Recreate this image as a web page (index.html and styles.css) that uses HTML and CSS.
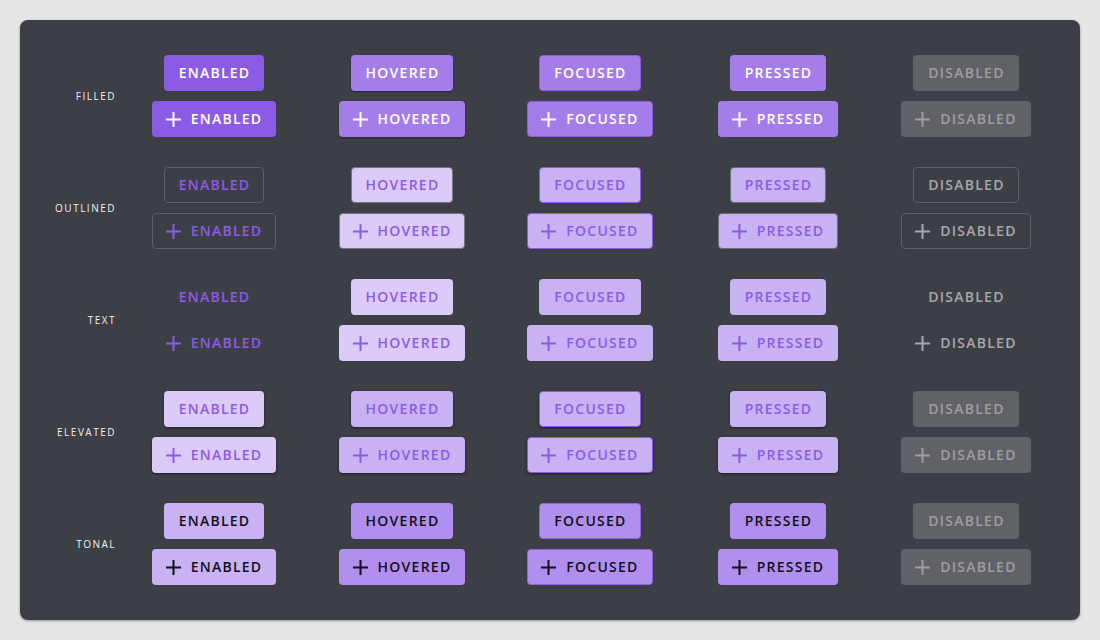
FILE: index.html
```html
<!DOCTYPE html>
<html>
<head>
<meta charset="utf-8">
<link rel="stylesheet" href="styles.css">
</head>
<body>
<div class="panel">
  <div class="grid">
    <!-- FILLED -->
    <div class="label">FILLED</div>
    <div class="cell"><button class="btn filled enabled">ENABLED</button><button class="btn icon filled enabled"><svg class="plus" viewBox="0 0 15 15"><path d="M7.5 0v15M0 7.5h15"/></svg>ENABLED</button></div>
    <div class="cell"><button class="btn filled hovered">HOVERED</button><button class="btn icon filled hovered"><svg class="plus" viewBox="0 0 15 15"><path d="M7.5 0v15M0 7.5h15"/></svg>HOVERED</button></div>
    <div class="cell"><button class="btn filled focused">FOCUSED</button><button class="btn icon filled focused"><svg class="plus" viewBox="0 0 15 15"><path d="M7.5 0v15M0 7.5h15"/></svg>FOCUSED</button></div>
    <div class="cell"><button class="btn filled pressed">PRESSED</button><button class="btn icon filled pressed"><svg class="plus" viewBox="0 0 15 15"><path d="M7.5 0v15M0 7.5h15"/></svg>PRESSED</button></div>
    <div class="cell"><button class="btn solid-disabled">DISABLED</button><button class="btn icon solid-disabled"><svg class="plus" viewBox="0 0 15 15"><path d="M7.5 0v15M0 7.5h15"/></svg>DISABLED</button></div>

    <!-- OUTLINED -->
    <div class="label">OUTLINED</div>
    <div class="cell"><button class="btn outlined enabled">ENABLED</button><button class="btn icon outlined enabled"><svg class="plus" viewBox="0 0 15 15"><path d="M7.5 0v15M0 7.5h15"/></svg>ENABLED</button></div>
    <div class="cell"><button class="btn outlined hovered">HOVERED</button><button class="btn icon outlined hovered"><svg class="plus" viewBox="0 0 15 15"><path d="M7.5 0v15M0 7.5h15"/></svg>HOVERED</button></div>
    <div class="cell"><button class="btn outlined focused">FOCUSED</button><button class="btn icon outlined focused"><svg class="plus" viewBox="0 0 15 15"><path d="M7.5 0v15M0 7.5h15"/></svg>FOCUSED</button></div>
    <div class="cell"><button class="btn outlined pressed">PRESSED</button><button class="btn icon outlined pressed"><svg class="plus" viewBox="0 0 15 15"><path d="M7.5 0v15M0 7.5h15"/></svg>PRESSED</button></div>
    <div class="cell"><button class="btn outlined disabled">DISABLED</button><button class="btn icon outlined disabled"><svg class="plus" viewBox="0 0 15 15"><path d="M7.5 0v15M0 7.5h15"/></svg>DISABLED</button></div>

    <!-- TEXT -->
    <div class="label">TEXT</div>
    <div class="cell"><button class="btn text enabled">ENABLED</button><button class="btn icon text enabled"><svg class="plus" viewBox="0 0 15 15"><path d="M7.5 0v15M0 7.5h15"/></svg>ENABLED</button></div>
    <div class="cell"><button class="btn text hovered">HOVERED</button><button class="btn icon text hovered"><svg class="plus" viewBox="0 0 15 15"><path d="M7.5 0v15M0 7.5h15"/></svg>HOVERED</button></div>
    <div class="cell"><button class="btn text focused">FOCUSED</button><button class="btn icon text focused"><svg class="plus" viewBox="0 0 15 15"><path d="M7.5 0v15M0 7.5h15"/></svg>FOCUSED</button></div>
    <div class="cell"><button class="btn text pressed">PRESSED</button><button class="btn icon text pressed"><svg class="plus" viewBox="0 0 15 15"><path d="M7.5 0v15M0 7.5h15"/></svg>PRESSED</button></div>
    <div class="cell"><button class="btn text disabled">DISABLED</button><button class="btn icon text disabled"><svg class="plus" viewBox="0 0 15 15"><path d="M7.5 0v15M0 7.5h15"/></svg>DISABLED</button></div>

    <!-- ELEVATED -->
    <div class="label">ELEVATED</div>
    <div class="cell"><button class="btn elevated enabled">ENABLED</button><button class="btn icon elevated enabled"><svg class="plus" viewBox="0 0 15 15"><path d="M7.5 0v15M0 7.5h15"/></svg>ENABLED</button></div>
    <div class="cell"><button class="btn elevated hovered">HOVERED</button><button class="btn icon elevated hovered"><svg class="plus" viewBox="0 0 15 15"><path d="M7.5 0v15M0 7.5h15"/></svg>HOVERED</button></div>
    <div class="cell"><button class="btn elevated focused">FOCUSED</button><button class="btn icon elevated focused"><svg class="plus" viewBox="0 0 15 15"><path d="M7.5 0v15M0 7.5h15"/></svg>FOCUSED</button></div>
    <div class="cell"><button class="btn elevated pressed">PRESSED</button><button class="btn icon elevated pressed"><svg class="plus" viewBox="0 0 15 15"><path d="M7.5 0v15M0 7.5h15"/></svg>PRESSED</button></div>
    <div class="cell"><button class="btn solid-disabled">DISABLED</button><button class="btn icon solid-disabled"><svg class="plus" viewBox="0 0 15 15"><path d="M7.5 0v15M0 7.5h15"/></svg>DISABLED</button></div>

    <!-- TONAL -->
    <div class="label">TONAL</div>
    <div class="cell"><button class="btn tonal enabled">ENABLED</button><button class="btn icon tonal enabled"><svg class="plus" viewBox="0 0 15 15"><path d="M7.5 0v15M0 7.5h15"/></svg>ENABLED</button></div>
    <div class="cell"><button class="btn tonal hovered">HOVERED</button><button class="btn icon tonal hovered"><svg class="plus" viewBox="0 0 15 15"><path d="M7.5 0v15M0 7.5h15"/></svg>HOVERED</button></div>
    <div class="cell"><button class="btn tonal focused">FOCUSED</button><button class="btn icon tonal focused"><svg class="plus" viewBox="0 0 15 15"><path d="M7.5 0v15M0 7.5h15"/></svg>FOCUSED</button></div>
    <div class="cell"><button class="btn tonal pressed">PRESSED</button><button class="btn icon tonal pressed"><svg class="plus" viewBox="0 0 15 15"><path d="M7.5 0v15M0 7.5h15"/></svg>PRESSED</button></div>
    <div class="cell"><button class="btn solid-disabled">DISABLED</button><button class="btn icon solid-disabled"><svg class="plus" viewBox="0 0 15 15"><path d="M7.5 0v15M0 7.5h15"/></svg>DISABLED</button></div>
  </div>
</div>
</body>
</html>
```

FILE: styles.css
```css
* { box-sizing: border-box; }

html, body {
  margin: 0;
  padding: 0;
  background: #e7e7e7;
  font-family: "Open Sans", "Noto Sans", sans-serif;
}

body {
  padding: 20px;
}

.panel {
  width: 1060px;
  height: 600px;
  background: #3d3f47;
  border-radius: 8px;
  box-shadow: 0 1px 3px rgba(0, 0, 0, 0.35);
  padding: 35px 20px;
}

.grid {
  display: grid;
  grid-template-columns: 80px repeat(5, 1fr);
  grid-auto-rows: 82px;
  row-gap: 30px;
}

.label {
  align-self: center;
  text-align: right;
  padding-right: 4px;
  font-size: 10px;
  font-weight: 500;
  letter-spacing: 1.5px;
  color: #f0f0f0;
}

.cell {
  display: flex;
  flex-direction: column;
  align-items: center;
  gap: 10px;
}

.btn {
  display: inline-flex;
  align-items: center;
  justify-content: center;
  height: 36px;
  padding: 0 13px 0 14px;
  border: 1px solid transparent;
  border-radius: 4px;
  background: transparent;
  font-family: "Open Sans", "Noto Sans", sans-serif;
  font-size: 14px;
  font-weight: 600;
  letter-spacing: 1.25px;
  line-height: 1;
  white-space: nowrap;
  cursor: default;
}

.btn.icon {
  padding: 0 13px 0 13px;
  gap: 10px;
}

.plus {
  width: 15px;
  height: 15px;
  flex: none;
}

.plus path {
  stroke: currentColor;
  stroke-width: 2;
  fill: none;
}

/* Filled */
.filled { color: #ffffff; }
.filled.enabled { background: #8b5be5; }
.filled.hovered {
  background: #a47dea;
  box-shadow: 0 1px 2px rgba(0, 0, 0, 0.35);
}
.filled.focused {
  background: #a47dea;
  border-color: #8a5de2;
}
.filled.pressed { background: #a47dea; }

/* Disabled solid */
.solid-disabled {
  background: #616267;
  color: #9d9ea2;
}

/* Outlined */
.outlined { color: #8b5be5; border-color: #5e6068; }
.outlined.enabled { background: transparent; }
.outlined.hovered { background: #dccbf8; border-color: #77787e; }
.outlined.focused { background: #c9b2f4; border-color: #8b5ce6; }
.outlined.pressed { background: #c9b2f4; border-color: #6e6f75; }
.outlined.disabled { background: transparent; color: #a6a7ab; }

/* Text */
.text { color: #8b5be5; }
.text.hovered { background: #dccbf8; }
.text.focused { background: #c9b2f4; }
.text.pressed { background: #c9b2f4; }
.text.disabled { color: #a6a7ab; }

/* Elevated */
.elevated {
  color: #8b5be5;
  box-shadow: 0 1px 2px rgba(0, 0, 0, 0.4), 0 1px 3px 1px rgba(0, 0, 0, 0.12);
}
.elevated.enabled { background: #dccbf8; }
.elevated.hovered { background: #c9b2f4; }
.elevated.focused { background: #c9b2f4; border-color: #8b5ce6; }
.elevated.pressed { background: #c9b2f4; }

/* Tonal */
.tonal { color: #111018; }
.tonal.enabled { background: #c9b2f4; }
.tonal.hovered { background: #b18fee; }
.tonal.focused { background: #b18fee; border-color: #8f63e6; }
.tonal.pressed { background: #b18fee; }
```
